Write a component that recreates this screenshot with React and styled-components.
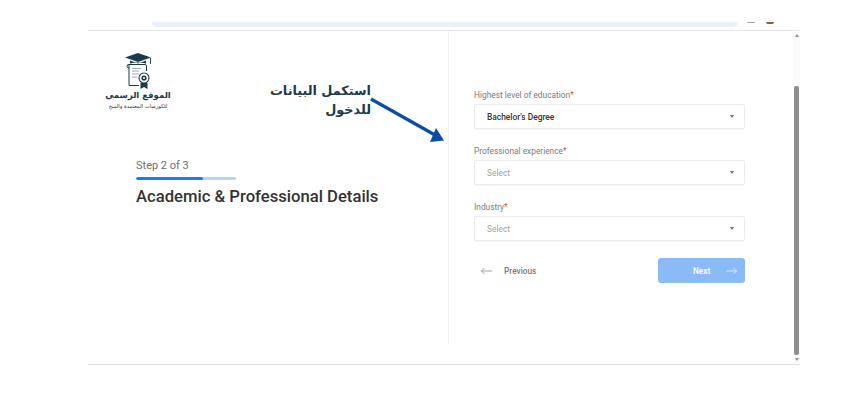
import React from 'react'
import styled, { createGlobalStyle } from 'styled-components'

const GlobalStyle = createGlobalStyle`
  html, body {
    margin: 0;
    padding: 0;
    background: #fff;
    font-family: Roboto, "Liberation Sans", sans-serif;
  }
`

const Page = styled.div`
  width: 842px;
  height: 413px;
  overflow: hidden;
  padding-left: 88px;
  box-sizing: border-box;
`

const Frame = styled.div`
  width: 712px;
`

const BrowserStrip = styled.div`
  height: 31px;
  box-sizing: border-box;
  padding: 22px 0 0 64px;
  display: flex;
  align-items: flex-start;
  border-bottom: 1px solid #e8e8e8;
`

const UrlBar = styled.div`
  width: 586px;
  height: 5px;
  background: #ebf1fa;
  border-radius: 0 0 8px 8px;
`

const StripMark = styled.div`
  width: 8px;
  height: ${p => p.$h}px;
  margin-left: ${p => p.$gap}px;
  background: ${p => p.$color};
  border-radius: 0 0 4px 4px;
`

const Body = styled.div`
  display: flex;
  height: 333px;
  border-bottom: 1px solid #e2e2e2;
`

const LeftPanel = styled.section`
  position: relative;
  width: 361px;
  height: 314px;
  box-sizing: border-box;
  border-right: 1px solid #f1f1f1;
  padding: 22px 0 0 48px;
`

const Logo = styled.div`
  width: 66px;
  margin-left: -31px;
  display: flex;
  flex-direction: column;
  align-items: center;
  color: #1b3a4b;
  font-family: "DejaVu Sans", sans-serif;
`

const LogoTitle = styled.div`
  font-size: 8.5px;
  font-weight: 700;
  line-height: 12px;
  white-space: nowrap;
`

const LogoSub = styled.div`
  font-size: 5.3px;
  line-height: 8px;
  margin-top: 1px;
  white-space: nowrap;
`

const Annotation = styled.div`
  position: absolute;
  top: 50px;
  right: 77px;
  width: 130px;
  direction: rtl;
  text-align: right;
  font-family: "DejaVu Sans", sans-serif;
  font-size: 12.8px;
  font-weight: 700;
  line-height: 19px;
  color: #1b3a4b;
`

const Arrow = styled.svg`
  position: absolute;
  top: 66px;
  left: 280px;
`

const Steps = styled.div`
  margin-top: 49px;
`

const StepLabel = styled.div`
  font-size: 11px;
  line-height: 14px;
  color: #6f6f6f;
`

const Progress = styled.div`
  width: 100px;
  height: 3px;
  margin-top: 4px;
  background: #b5d5fb;
  border-radius: 2px;
  overflow: hidden;
`

const ProgressFill = styled.div`
  height: 100%;
  background: #1a7de8;
  border-radius: 2px;
`

const Heading = styled.h1`
  margin: 5px 0 0;
  font-size: 16.65px;
  line-height: 24px;
  font-weight: 500;
  color: #333;
  white-space: nowrap;
`

const RightPanel = styled.section`
  width: 344px;
  box-sizing: border-box;
  padding: 58px 0 0 25px;
`

const Field = styled.div`
  width: 271px;
  margin-bottom: 16px;
`

const Label = styled.label`
  display: block;
  font-size: 8.35px;
  line-height: 12px;
  color: #7c7c7c;
  margin-bottom: 3px;

  span {
    color: #e5484d;
  }
`

const Select = styled.div`
  height: 25px;
  box-sizing: border-box;
  padding: 0 10px 0 12px;
  display: flex;
  align-items: center;
  justify-content: space-between;
  background: #fff;
  border: 1px solid #ececec;
  border-radius: 2px;
  box-shadow: 0 1px 1px rgba(0, 0, 0, 0.04);
  font-size: 8.4px;
  color: ${p => (p.$placeholder ? '#a2a2a2' : '#333')};
  font-weight: ${p => (p.$placeholder ? 400 : 500)};
`

const Caret = styled.i`
  width: 0;
  height: 0;
  border-left: 2px solid transparent;
  border-right: 2px solid transparent;
  border-top: 3px solid #777;
`

const Actions = styled.div`
  width: 271px;
  display: flex;
  align-items: center;
  justify-content: space-between;
  margin-top: 17px;
`

const PrevButton = styled.div`
  display: flex;
  align-items: center;
  gap: 12px;
  padding-left: 7px;
  font-size: 8.3px;
  font-weight: 500;
  color: #7a7a7a;
`

const NextButton = styled.div`
  width: 87px;
  height: 25px;
  box-sizing: border-box;
  padding: 0 8px 0 35px;
  display: flex;
  align-items: center;
  justify-content: space-between;
  background: #8abbf7;
  border-radius: 3px;
  font-size: 8.3px;
  font-weight: 700;
  color: #f2f7fe;
`

const Scrollbar = styled.div`
  width: 7px;
  background: #fbfbfb;
  display: flex;
  flex-direction: column;
  align-items: center;
  padding-top: 3px;
  box-sizing: border-box;
`

const ScrollUp = styled.i`
  width: 0;
  height: 0;
  border-left: 2.5px solid transparent;
  border-right: 2.5px solid transparent;
  border-bottom: 3px solid #8f8f8f;
`

const ScrollDown = styled.i`
  width: 0;
  height: 0;
  margin-top: 3px;
  border-left: 2.5px solid transparent;
  border-right: 2.5px solid transparent;
  border-top: 3px solid #8f8f8f;
`

const ScrollThumb = styled.div`
  width: 5px;
  height: 269px;
  margin-top: 49px;
  background: #8f8f8f;
  border-radius: 2px;
`

const CertificateIcon = () => (
  <svg width="27" height="36" viewBox="0 0 27 36" fill="none">
    <path d="M13 0 26 4.5 13 9 0 4.5z" fill="#1b3a4b" />
    <path d="M5 7.5v3c3-1.5 13-1.5 16 0v-3l-8 3z" fill="#1b3a4b" />
    <path d="M25.5 5v6" stroke="#1b3a4b" strokeWidth="0.9" />
    <path d="M4 11.5h16a1.5 1.5 0 0 1 1.5 1.5v5M4 11.5a1.8 1.8 0 0 0-2 1.8 1.8 1.8 0 0 0 2 1.7M4 11.5v21h10" stroke="#1b3a4b" strokeWidth="1" />
    <path d="M7 15.5h9M7 18h7M7 21h7M7 24h5" stroke="#7f939e" strokeWidth="0.8" />
    <circle cx="19" cy="25" r="5" fill="#fff" stroke="#1b3a4b" strokeWidth="1.1" />
    <circle cx="19" cy="25" r="2.6" fill="#1b3a4b" />
    <circle cx="19" cy="25" r="1" fill="#fff" />
    <path d="M15.5 30v6l3.5-2 3.5 2v-6z" fill="#1b3a4b" />
  </svg>
)

const LineArrow = ({ flip, color }) => (
  <svg width="11" height="8" viewBox="0 0 11 8" fill="none" style={flip ? { transform: 'scaleX(-1)' } : undefined}>
    <path d="M0 4h10.5M7.5 1l3 3-3 3" stroke={color} strokeWidth="0.8" />
  </svg>
)

const fields = [
  { label: 'Highest level of education', value: "Bachelor's Degree" },
  { label: 'Professional experience', placeholder: 'Select' },
  { label: 'Industry', placeholder: 'Select' }
]

export default function App() {
  return (
    <Page>
      <GlobalStyle />
      <Frame>
        <BrowserStrip>
          <UrlBar />
          <StripMark $h={1} $gap={9} $color="#a9a9a9" />
          <StripMark $h={2} $gap={11} $color="#8a5a4c" />
        </BrowserStrip>
        <Body>
          <LeftPanel>
            <Logo>
              <CertificateIcon />
              <LogoTitle>الموقع الرسمي</LogoTitle>
              <LogoSub>للكورسات المعتمدة والمنح</LogoSub>
            </Logo>
            <Annotation>استكمل البيانات<br />للدخول</Annotation>
            <Arrow width="78" height="50" viewBox="0 0 78 50">
              <path d="M3 2 67 38" stroke="#0b4ca8" strokeWidth="3.2" />
              <path d="M76 43.5 62 45 68 31z" fill="#0b4ca8" />
            </Arrow>
            <Steps>
              <StepLabel>Step 2 of 3</StepLabel>
              <Progress>
                <ProgressFill style={{ width: `${(2 / 3) * 100}%` }} />
              </Progress>
              <Heading>Academic &amp; Professional Details</Heading>
            </Steps>
          </LeftPanel>
          <RightPanel>
            {fields.map(f => (
              <Field key={f.label}>
                <Label>{f.label}<span>*</span></Label>
                <Select $placeholder={!f.value}>
                  {f.value || f.placeholder}
                  <Caret />
                </Select>
              </Field>
            ))}
            <Actions>
              <PrevButton>
                <LineArrow flip color="#8a8a8a" />
                Previous
              </PrevButton>
              <NextButton>
                Next
                <LineArrow color="#e3effd" />
              </NextButton>
            </Actions>
          </RightPanel>
          <Scrollbar>
            <ScrollUp />
            <ScrollThumb />
            <ScrollDown />
          </Scrollbar>
        </Body>
      </Frame>
    </Page>
  )
}
